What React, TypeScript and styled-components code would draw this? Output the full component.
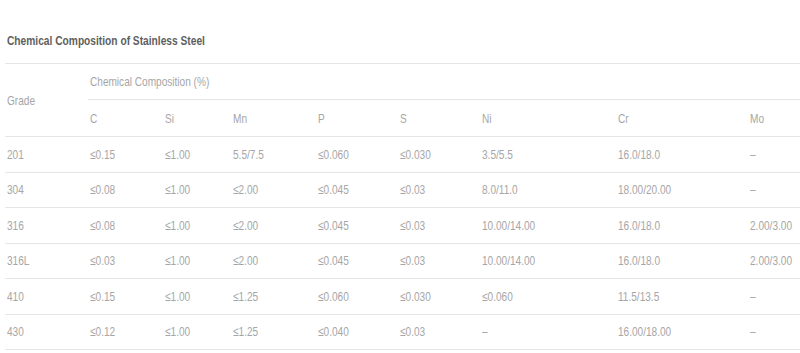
import React from 'react';
import styled, { createGlobalStyle } from 'styled-components';

const GlobalStyle = createGlobalStyle`
  html, body {
    margin: 0;
    padding: 0;
    background: #fff;
    overflow: hidden;
  }
  body {
    font-family: 'Liberation Sans Narrow', 'Liberation Sans', Arial, sans-serif;
  }
`;

const Page = styled.div`
  width: 800px;
  height: 353px;
  padding: 33px 0 0 5px;
  box-sizing: border-box;
  overflow: hidden;
`;

// the source font is a condensed face; squeeze the regular one to match
const Narrow = styled.span<{ $sx?: number }>`
  display: inline-block;
  transform: scaleX(${(p) => p.$sx ?? 0.775});
  transform-origin: left center;
`;

const Title = styled.h3`
  margin: 0 0 14px 2px;
  font-size: 13px;
  line-height: 16px;
  font-weight: bold;
  color: #5e5e5e;
  white-space: nowrap;
`;

const Table = styled.table`
  border-collapse: collapse;
  table-layout: fixed;
  width: 830px;
  font-size: 13px;
  color: #a6a6a6;
`;

const Row = styled.tr<{ $h: number }>`
  height: ${(p) => p.$h}px;
`;

const Cell = styled.td`
  padding: 0 0 0 2px;
  border-top: 1px solid #e6e6e6;
  border-bottom: 1px solid #e6e6e6;
  text-align: left;
  vertical-align: middle;
  font-weight: normal;
  white-space: nowrap;
`;

const widths = [83, 75, 68, 85, 82, 82, 136, 132, 87];
const elements = ['C', 'Si', 'Mn', 'P', 'S', 'Ni', 'Cr', 'Mo'];

const rows: string[][] = [
  ['201', '≤0.15', '≤1.00', '5.5/7.5', '≤0.060', '≤0.030', '3.5/5.5', '16.0/18.0', '–'],
  ['304', '≤0.08', '≤1.00', '≤2.00', '≤0.045', '≤0.03', '8.0/11.0', '18.00/20.00', '–'],
  ['316', '≤0.08', '≤1.00', '≤2.00', '≤0.045', '≤0.03', '10.00/14.00', '16.0/18.0', '2.00/3.00'],
  ['316L', '≤0.03', '≤1.00', '≤2.00', '≤0.045', '≤0.03', '10.00/14.00', '16.0/18.0', '2.00/3.00'],
  ['410', '≤0.15', '≤1.00', '≤1.25', '≤0.060', '≤0.030', '≤0.060', '11.5/13.5', '–'],
  ['430', '≤0.12', '≤1.00', '≤1.25', '≤0.040', '≤0.03', '–', '16.00/18.00', '–'],
];

function App() {
  return (
    <>
      <GlobalStyle />
      <Page>
        <Title>
          <Narrow $sx={0.785}>Chemical Composition of Stainless Steel</Narrow>
        </Title>
        <Table>
          <colgroup>
            {widths.map((w, i) => (
              <col key={i} style={{ width: w }} />
            ))}
          </colgroup>
          <thead>
            <Row $h={36}>
              <Cell as="th" rowSpan={2}><Narrow>Grade</Narrow></Cell>
              <Cell as="th" colSpan={8}><Narrow>Chemical Composition (%)</Narrow></Cell>
            </Row>
            <Row $h={37}>
              {elements.map((e) => (
                <Cell as="th" key={e}><Narrow>{e}</Narrow></Cell>
              ))}
            </Row>
          </thead>
          <tbody>
            {rows.map((r) => (
              <Row $h={35.5} key={r[0]}>
                {r.map((v, i) => (
                  <Cell key={i}><Narrow>{v}</Narrow></Cell>
                ))}
              </Row>
            ))}
          </tbody>
        </Table>
      </Page>
    </>
  );
}

export default App;
